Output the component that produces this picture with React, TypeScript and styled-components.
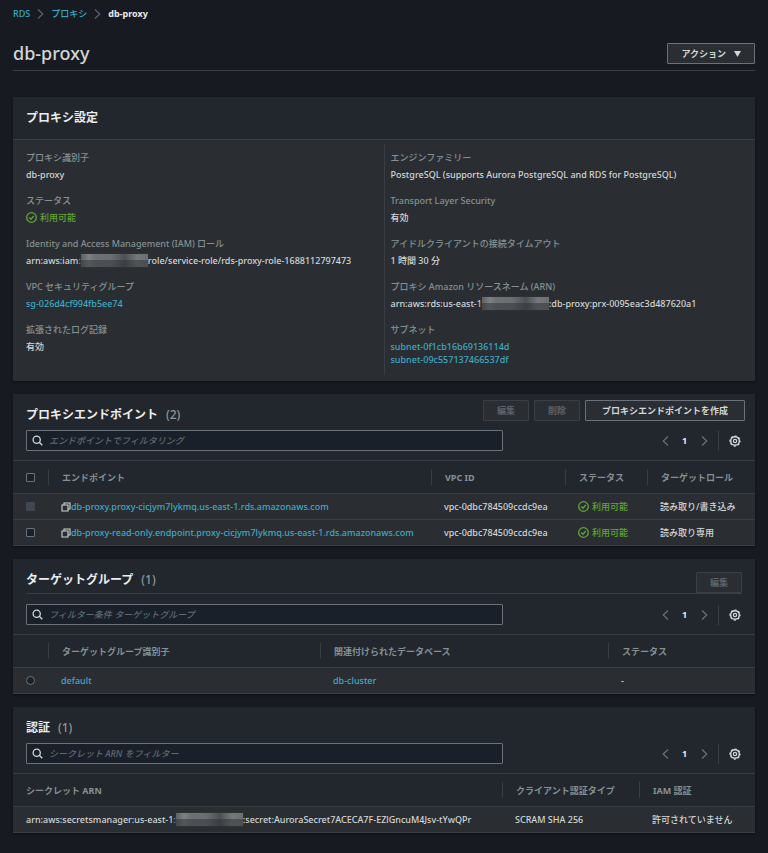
import React from "react";
import styled, { createGlobalStyle } from "styled-components";

const color = {
  page: "#171a21",
  panel: "#2a2e32",
  header: "#22262d",
  line: "#393e45",
  text: "#d2d6d7",
  bright: "#eaeded",
  label: "#849192",
  link: "#3ea9c5",
  ok: "#62a534",
  border: "#69727a",
  dim: "#5b636b",
  field: "#1a2029",
};

const GlobalStyle = createGlobalStyle`
  *, *::before, *::after { box-sizing: border-box; }
  body {
    margin: 0;
    background: ${color.page};
    color: ${color.text};
    font-family: "Noto Sans", "Noto Sans CJK JP", sans-serif;
    font-size: 9px;
    line-height: 13px;
    font-weight: 500;
  }
  button, input { font: inherit; color: inherit; }
`;

const Page = styled.div`
  padding: 7px 13px 20px;
`;

const Breadcrumbs = styled.nav`
  ol {
    display: flex;
    align-items: center;
    gap: 7px;
    margin: 0;
    padding: 0;
    list-style: none;
  }
  li {
    display: flex;
    align-items: center;
    gap: 7px;
  }
  svg { color: ${color.dim}; }
`;

const Link = styled.a`
  color: ${color.link};
  text-decoration: none;
  &:hover { text-decoration: underline; }
`;

const Current = styled.span`
  font-weight: 700;
  color: ${color.bright};
`;

const TitleBar = styled.header`
  display: flex;
  align-items: center;
  justify-content: space-between;
  margin-top: 19px;
  padding: 0 0 2px;
  border-bottom: 1px solid ${color.line};
`;

const Title = styled.h1`
  margin: 0;
  font-size: 18px;
  line-height: 29px;
  font-weight: 500;
`;

const Button = styled.button<{ $wide?: boolean }>`
  display: inline-flex;
  align-items: center;
  justify-content: center;
  gap: 8px;
  height: 21px;
  padding: 0 ${(p) => (p.$wide ? 16 : 13)}px;
  border: 1px solid ${color.border};
  border-radius: 1px;
  background: ${color.panel};
  color: ${color.text};
  font-weight: 700;
  white-space: nowrap;
  &:disabled {
    border-color: #3a3f46;
    color: ${color.dim};
  }
`;

const Panels = styled.main`
  display: flex;
  flex-direction: column;
  gap: 13px;
  margin-top: 26px;
`;

const Panel = styled.section`
  background: ${color.panel};
  box-shadow: 0 1px 2px #0d1015;
`;

const PanelHeader = styled.div`
  padding: 12px 13px;
  background: ${color.header};
  border-bottom: 1px solid ${color.line};
`;

const Heading = styled.h2`
  margin: 0;
  font-size: 12px;
  line-height: 18px;
  font-weight: 700;
  color: ${color.bright};
`;

const Count = styled.span`
  margin-left: 8px;
  font-weight: 500;
  color: #8f9798;
`;

const Settings = styled.div`
  display: grid;
  grid-template-columns: 1fr 1fr;
  padding: 4px 0 6px 13px;
`;

const Fields = styled.dl<{ $divided?: boolean }>`
  display: flex;
  flex-direction: column;
  gap: 13px;
  margin: 0;
  padding: 7px 0 9px ${(p) => (p.$divided ? 6 : 0)}px;
  border-left: ${(p) => (p.$divided ? `1px solid ${color.line}` : "0")};
  margin-left: ${(p) => (p.$divided ? -7 : 0)}px;
`;

const FieldLabel = styled.dt`
  margin-bottom: 4px;
  color: ${color.label};
`;

const FieldValue = styled.dd`
  display: flex;
  flex-direction: column;
  align-items: flex-start;
  margin: 0;
  white-space: nowrap;
`;

const Inline = styled.span`
  display: flex;
  align-items: center;
`;

const Mosaic = styled.span`
  flex: none;
  width: 67px;
  height: 13px;
  background:
    linear-gradient(180deg, #2a2e3200 0 6px, #2a2e3280 6px 13px),
    linear-gradient(90deg,
      #5c6063 0, #7e8183 8px, #6e7174 14px, #6c6f72 30px,
      #5e6265 36px, #4c5053 44px, #5a5e61 48px, #75787a 56px, #6c6f72 67px);
  box-shadow: 0 0 2px 1px #303438;
`;

const Status = styled.span`
  display: flex;
  align-items: center;
  gap: 3px;
  color: ${color.ok};
`;

const Tools = styled.div`
  background: ${color.header};
  border-bottom: 1px solid ${color.line};
`;

const HeadingRow = styled.div<{ $ruled?: boolean }>`
  display: flex;
  align-items: ${(p) => (p.$ruled ? "flex-end" : "flex-start")};
  justify-content: space-between;
  margin: 0 ${(p) => (p.$ruled ? 13 : 10)}px 0 13px;
  padding-top: ${(p) => (p.$ruled ? 12 : 6)}px;
  border-bottom: ${(p) => (p.$ruled ? `1px solid ${color.line}` : "0")};
  ${Heading} {
    padding-top: ${(p) => (p.$ruled ? 0 : 6)}px;
    padding-bottom: ${(p) => (p.$ruled ? 4 : 0)}px;
  }
`;

const ButtonRow = styled.div`
  display: flex;
  gap: 5px;
`;

const FilterRow = styled.div<{ $spaced?: boolean }>`
  display: flex;
  align-items: center;
  justify-content: space-between;
  gap: 156px;
  padding: ${(p) => (p.$spaced ? 10 : 6)}px 14px 9px 13px;
`;

const SearchBox = styled.label`
  display: flex;
  flex: 1;
  align-items: center;
  gap: 6px;
  height: 21px;
  padding: 0 5px;
  border: 1px solid ${color.border};
  border-radius: 1px;
  background: ${color.field};
  input {
    flex: 1;
    min-width: 0;
    padding: 0;
    border: 0;
    outline: 0;
    background: transparent;
  }
  input::placeholder {
    color: #606970;
    font-style: italic;
    opacity: 1;
  }
`;

const Pager = styled.div`
  display: flex;
  align-items: center;
  span {
    width: 27px;
    text-align: center;
    font-weight: 700;
    color: ${color.bright};
  }
`;

const IconButton = styled.button<{ $bright?: boolean }>`
  display: inline-flex;
  align-items: center;
  justify-content: center;
  width: 12px;
  height: 20px;
  padding: 0;
  border: 0;
  background: none;
  color: ${(p) => (p.$bright ? color.text : color.border)};
`;

const GearSlot = styled.div`
  display: flex;
  margin-left: 8px;
  padding-left: 10px;
  border-left: 1px solid ${color.line};
`;

const Table = styled.table`
  width: 100%;
  table-layout: fixed;
  border-collapse: collapse;
  text-align: left;
  white-space: nowrap;
  thead { background: ${color.header}; }
  tr { border-bottom: 1px solid ${color.line}; }
  th { padding: 8px 0; }
  td { height: 26px; padding: 0 0 0 13px; }
`;

const Col = styled.col<{ $w: number }>`
  width: ${(p) => p.$w}px;
`;

const HeadCell = styled.div<{ $first?: boolean }>`
  display: flex;
  align-items: center;
  height: 16px;
  padding-left: 13px;
  border-left: ${(p) => (p.$first ? "0" : `1px solid ${color.line}`)};
  font-weight: 700;
  color: ${color.label};
`;

const Choice = styled.input`
  appearance: none;
  display: block;
  width: 9px;
  height: 9px;
  margin: 0;
  border: 1px solid ${color.border};
  border-radius: ${(p) => (p.type === "radio" ? "50%" : "1px")};
  background: ${color.field};
  &:disabled {
    border-color: #414750;
    background: #414750;
  }
`;

const CopyButton = styled.button`
  display: inline-flex;
  flex: none;
  padding: 0;
  border: 0;
  background: none;
  color: ${color.text};
`;

const Chevron = ({ left }: { left?: boolean }) => (
  <svg width="7" height="10" viewBox="0 0 7 10" fill="none" stroke="currentColor" strokeWidth="1.2" aria-hidden="true">
    <path d={left ? "M6 .5 1.2 5 6 9.5" : "M1 .5 5.8 5 1 9.5"} />
  </svg>
);

const CheckIcon = () => (
  <svg width="11" height="11" viewBox="0 0 16 16" fill="none" stroke="currentColor" strokeWidth="1.9" aria-hidden="true">
    <circle cx="8" cy="8" r="7" />
    <path d="M4.7 8.1 7.2 10.5 11.3 5.9" />
  </svg>
);

const SearchIcon = () => (
  <svg width="11" height="11" viewBox="0 0 11 11" fill="none" stroke={color.text} strokeWidth="1.3" aria-hidden="true">
    <circle cx="4.7" cy="4.7" r="3.6" />
    <path d="m7.3 7.3 3 3" />
  </svg>
);

const GearIcon = () => (
  <svg width="12" height="12" viewBox="0 0 16 16" fill="none" stroke="currentColor" aria-hidden="true">
    <circle cx="8" cy="8" r="5.8" strokeWidth="2" />
    <circle cx="8" cy="8" r="2.2" strokeWidth="1.6" />
    <circle cx="8" cy="8" r="6.8" strokeWidth="1.4" strokeDasharray="3 2.34" strokeDashoffset="1.5" />
  </svg>
);

const CopyIcon = () => (
  <svg width="10" height="10" viewBox="0 0 10 10" fill="none" stroke="currentColor" strokeWidth="1.1" aria-hidden="true">
    <path d="M1 3h6v6H1z" />
    <path d="M3 3V1h6v6H7" />
  </svg>
);

const Available = () => (
  <Status>
    <CheckIcon />
    利用可能
  </Status>
);

const Filter = ({ placeholder, spaced }: { placeholder: string; spaced?: boolean }) => (
  <FilterRow $spaced={spaced}>
    <SearchBox>
      <SearchIcon />
      <input type="search" placeholder={placeholder} aria-label={placeholder} />
    </SearchBox>
    <Pager>
      <IconButton type="button" aria-label="前のページ"><Chevron left /></IconButton>
      <span>1</span>
      <IconButton type="button" aria-label="次のページ"><Chevron /></IconButton>
      <GearSlot>
        <IconButton type="button" $bright aria-label="設定"><GearIcon /></IconButton>
      </GearSlot>
    </Pager>
  </FilterRow>
);

const Field = ({ label, children }: { label: string; children: React.ReactNode }) => (
  <div>
    <FieldLabel>{label}</FieldLabel>
    <FieldValue>{children}</FieldValue>
  </div>
);

const endpoints = [
  { name: "db-proxy.proxy-cicjym7lykmq.us-east-1.rds.amazonaws.com", role: "読み取り/書き込み", locked: true },
  { name: "db-proxy-read-only.endpoint.proxy-cicjym7lykmq.us-east-1.rds.amazonaws.com", role: "読み取り専用", locked: false },
];

export default function App() {
  return (
    <>
      <GlobalStyle />
      <Page>
        <Breadcrumbs aria-label="パンくずリスト">
          <ol>
            <li><Link href="#rds">RDS</Link><Chevron /></li>
            <li><Link href="#proxies">プロキシ</Link><Chevron /></li>
            <li><Current aria-current="page">db-proxy</Current></li>
          </ol>
        </Breadcrumbs>
        <TitleBar>
          <Title>db-proxy</Title>
          <Button type="button">
            アクション
            <svg width="7" height="6" viewBox="0 0 7 6" fill="currentColor" aria-hidden="true"><path d="M0 0h7L3.5 6z" /></svg>
          </Button>
        </TitleBar>

        <Panels>
          <Panel>
            <PanelHeader><Heading>プロキシ設定</Heading></PanelHeader>
            <Settings>
              <Fields>
                <Field label="プロキシ識別子">db-proxy</Field>
                <Field label="ステータス"><Available /></Field>
                <Field label="Identity and Access Management (IAM) ロール">
                  <Inline>arn:aws:iam:<Mosaic />role/service-role/rds-proxy-role-1688112797473</Inline>
                </Field>
                <Field label="VPC セキュリティグループ"><Link href="#sg">sg-026d4cf994fb5ee74</Link></Field>
                <Field label="拡張されたログ記録">有効</Field>
              </Fields>
              <Fields $divided>
                <Field label="エンジンファミリー">PostgreSQL (supports Aurora PostgreSQL and RDS for PostgreSQL)</Field>
                <Field label="Transport Layer Security">有効</Field>
                <Field label="アイドルクライアントの接続タイムアウト">1 時間 30 分</Field>
                <Field label="プロキシ Amazon リソースネーム (ARN)">
                  <Inline>arn:aws:rds:us-east-1<Mosaic />:db-proxy:prx-0095eac3d487620a1</Inline>
                </Field>
                <Field label="サブネット">
                  <Link href="#subnet-a">subnet-0f1cb16b69136114d</Link>
                  <Link href="#subnet-b">subnet-09c557137466537df</Link>
                </Field>
              </Fields>
            </Settings>
          </Panel>

          <Panel>
            <Tools>
              <HeadingRow>
                <Heading>プロキシエンドポイント<Count>(2)</Count></Heading>
                <ButtonRow>
                  <Button type="button" disabled>編集</Button>
                  <Button type="button" disabled>削除</Button>
                  <Button type="button" $wide>プロキシエンドポイントを作成</Button>
                </ButtonRow>
              </HeadingRow>
              <Filter placeholder="エンドポイントでフィルタリング" />
            </Tools>
            <Table>
              <colgroup><Col $w={35} /><col /><Col $w={134} /><Col $w={82} /><Col $w={108} /></colgroup>
              <thead>
                <tr>
                  <th><HeadCell $first><Choice type="checkbox" aria-label="すべて選択" /></HeadCell></th>
                  <th><HeadCell>エンドポイント</HeadCell></th>
                  <th><HeadCell>VPC ID</HeadCell></th>
                  <th><HeadCell>ステータス</HeadCell></th>
                  <th><HeadCell>ターゲットロール</HeadCell></th>
                </tr>
              </thead>
              <tbody>
                {endpoints.map((e) => (
                  <tr key={e.name}>
                    <td><Choice type="checkbox" disabled={e.locked} aria-label={e.name} /></td>
                    <td>
                      <Inline>
                        <CopyButton type="button" aria-label="コピー"><CopyIcon /></CopyButton>
                        <Link href="#endpoint">{e.name}</Link>
                      </Inline>
                    </td>
                    <td>vpc-0dbc784509ccdc9ea</td>
                    <td><Available /></td>
                    <td>{e.role}</td>
                  </tr>
                ))}
              </tbody>
            </Table>
          </Panel>

          <Panel>
            <Tools>
              <HeadingRow $ruled>
                <Heading>ターゲットグループ<Count>(1)</Count></Heading>
                <Button type="button" disabled>編集</Button>
              </HeadingRow>
              <Filter spaced placeholder="フィルター条件 ターゲットグループ" />
            </Tools>
            <Table>
              <colgroup><Col $w={35} /><Col $w={272} /><Col $w={288} /><col /></colgroup>
              <thead>
                <tr>
                  <th><HeadCell $first /></th>
                  <th><HeadCell>ターゲットグループ識別子</HeadCell></th>
                  <th><HeadCell>関連付けられたデータベース</HeadCell></th>
                  <th><HeadCell>ステータス</HeadCell></th>
                </tr>
              </thead>
              <tbody>
                <tr>
                  <td><Choice type="radio" name="target-group" aria-label="default" /></td>
                  <td><Link href="#default">default</Link></td>
                  <td><Link href="#db-cluster">db-cluster</Link></td>
                  <td>-</td>
                </tr>
              </tbody>
            </Table>
          </Panel>

          <Panel>
            <Tools>
              <HeadingRow>
                <Heading>認証<Count>(1)</Count></Heading>
              </HeadingRow>
              <Filter placeholder="シークレット ARN をフィルター" />
            </Tools>
            <Table>
              <colgroup><col /><Col $w={137} /><Col $w={116} /></colgroup>
              <thead>
                <tr>
                  <th><HeadCell $first>シークレット ARN</HeadCell></th>
                  <th><HeadCell>クライアント認証タイプ</HeadCell></th>
                  <th><HeadCell>IAM 認証</HeadCell></th>
                </tr>
              </thead>
              <tbody>
                <tr>
                  <td><Inline>arn:aws:secretsmanager:us-east-1:<Mosaic />:secret:AuroraSecret7ACECA7F-EZlGncuM4Jsv-tYwQPr</Inline></td>
                  <td>SCRAM SHA 256</td>
                  <td>許可されていません</td>
                </tr>
              </tbody>
            </Table>
          </Panel>
        </Panels>
      </Page>
    </>
  );
}
